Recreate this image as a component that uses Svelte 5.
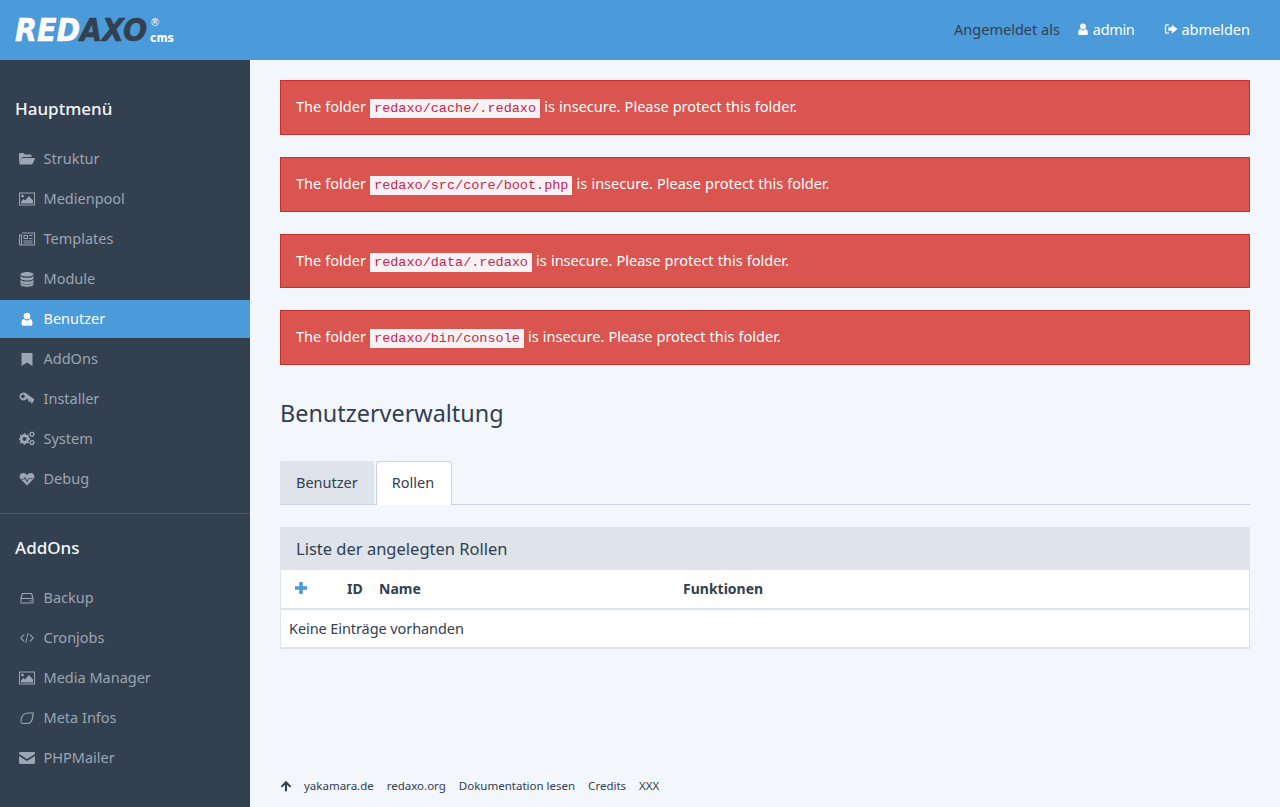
<script lang="ts">
  // builds a gear outline with a round hole, used by the System icon
  function gear(cx: number, cy: number, r: number, teeth: number, hole: number) {
    let d = '';
    const step = (Math.PI * 2) / (teeth * 4);
    const radii = [r, r, r * 0.8, r * 0.8];
    for (let i = 0; i < teeth * 4; i++) {
      const a = i * step - step / 2;
      const rad = radii[i % 4];
      const x = (cx + Math.cos(a) * rad).toFixed(2);
      const y = (cy + Math.sin(a) * rad).toFixed(2);
      d += (i === 0 ? 'M' : 'L') + x + ' ' + y;
    }
    d += `zM${cx - hole} ${cy}a${hole} ${hole} 0 1 0 ${hole * 2} 0a${hole} ${hole} 0 1 0 ${-hole * 2} 0z`;
    return d;
  }

  const icons: Record<string, string> = {
    folder:
      'M0 12.5V3.2C0 2.5.5 2 1.2 2h3.3l1.3 1.4h5.5c.7 0 1.2.5 1.2 1.2V6H4.2c-.7 0-1.3.3-1.7.9zM3.3 7h12.2c.4 0 .6.4.4.8l-2.4 5.2c-.2.4-.6.6-1 .6H.7c-.4 0-.6-.4-.4-.8l2.2-5.4c.2-.3.5-.4.8-.4z',
    picture:
      'M0 1.5h16v13H0zM1 2.500v11h14v-11zM3.500 3.700a1.400 1.400 0 1 0 0 2.800 1.400 1.400 0 0 0 0-2.800zM2 12.500v-2L4.500 8 6 9.500l4-4.500 4 4.500v3z',
    news:
      'M3 1.500h13v13H1.500C.7 14.500 0 13.800 0 13V3.500h3zM1 4.500V13c0 .3.2.5.5.5S2 13.300 2 13V4.500zM3 2.500V13c0 .2 0 .3-.1.5H15v-11zM4.500 4H9v4H4.500zM5.500 5v2H8V5zM10 4h3.500v1H10zM10 7h3.500v1H10zM4.500 9.500h9v1h-9zM4.500 11.500h9v1h-9z',
    database:
      'M8 1c3.600 0 6.500 1 6.500 2.300S11.600 5.600 8 5.600 1.500 4.600 1.500 3.300 4.400 1 8 1zM1.500 5C2.500 6.300 5 6.800 8 6.800s5.500-.5 6.500-1.800v2.200c0 1.300-2.900 2.300-6.500 2.300s-6.500-1-6.500-2.300zM1.500 8.800c1 1.300 3.500 1.800 6.500 1.800s5.500-.5 6.500-1.800V11c0 1.300-2.900 2.300-6.500 2.300S1.500 12.300 1.500 11zM1.500 12c1 1.300 3.500 1.700 6.500 1.700s5.500-.4 6.500-1.700v1.500c0 1.300-2.900 2.300-6.500 2.300s-6.500-1-6.500-2.300z',
    user:
      'M8 1.700a3.300 3.300 0 1 0 0 6.600 3.300 3.300 0 0 0 0-6.600zM4.300 14.800c-1.100 0-1.800-.7-1.800-1.800 0-2.400.5-5 2.500-5 .8.900 1.800 1.500 3 1.500s2.200-.6 3-1.500c2 0 2.500 2.600 2.500 5 0 1.100-.7 1.800-1.800 1.800z',
    bookmark: 'M2.500 2h11v13L8 11.500 2.500 15z',
    key:
      'M4.500 1.500a4 4 0 1 0 3.400 6.100l1.800 1.300-.7 1.100 1.400 1 .7-1.100.9.6-.6 1.100 1.300.9 1.600-1.500 1-2.800-7-4.900A4 4 0 0 0 4.500 1.500zM4 3.600a1.800 1.800 0 1 1 0 3.600 1.800 1.800 0 0 1 0-3.600z',
    cogs: gear(5.5, 8, 5.8, 8, 2) + gear(13, 3.2, 2.9, 6, 1.2) + gear(13, 11.6, 2.9, 6, 1.2),
    heart:
      'M8 14.500 1.500 8C-.5 5.500 1 2 4.200 2 5.800 2 7 2.800 8 4c1-1.200 2.200-2 3.800-2C15 2 16.500 5.500 14.500 8zM2.200 7.700h2.800l1-1.900 2 3.800 1.400-2.300h4.400v.8h-3.900L8 11.400l-2-3.800-.5.900H2.200z',
    hdd:
      'M3.700 3h8.600c.4 0 .7.2.9.5L14.500 8v4.500c0 .6-.4 1-1 1h-11c-.6 0-1-.4-1-1V8l1.300-4.500c.2-.3.5-.5.900-.5zM3.900 4 2.700 8h10.600l-1.200-4zM2.500 9v3.500h11V9zM10.500 10.500h1v1h-1zM12 10.500h1v1h-1z',
    code:
      'M5 4 1 8l4 4 .7-.7L2.400 8l3.300-3.300zM11 4l4 4-4 4-.7-.7L13.600 8l-3.300-3.300zM9.400 3 7.300 13h-.9L8.500 3z',
    leaf:
      'M15 2.500C14 6 15 14 8 14H4c-1.500 0-2.500-1-2.500-3 0-5 3.500-8.500 7.500-8.500zM13.800 3.500H9C5.500 3.500 2.500 6.500 2.500 11c0 1.400.6 2 1.500 2h4c5.500 0 4.600-6.500 5.800-9.500z',
    envelope:
      'M0 3.300C0 2.600.6 2 1.300 2h13.400c.7 0 1.300.6 1.300 1.300 0 .5-.3 1-.8 1.300L8 9 .8 4.600C.3 4.300 0 3.800 0 3.300zM0 6l8 5 8-5v6.500c0 .8-.7 1.500-1.500 1.500h-13C.7 14 0 13.300 0 12.500z',
    signout:
      'M5.500 2.500H3a2 2 0 0 0-2 2v7a2 2 0 0 0 2 2h2.500V12H3a.5.5 0 0 1-.5-.5v-7A.5.5 0 0 1 3 4h2.500zM9 3l6.500 5L9 13v-3H5V6h4z',
    up: 'M8 2l6 6.300-1.500 1.500-3.300-3.300V14H6.800V6.500L3.500 9.800 2 8.300z',
    plus: 'M6.300 2h3.400v4.300H14v3.400H9.700V14H6.300V9.700H2V6.300h4.300z',
  };

  const mainNav = [
    { label: 'Struktur', icon: 'folder' },
    { label: 'Medienpool', icon: 'picture' },
    { label: 'Templates', icon: 'news' },
    { label: 'Module', icon: 'database' },
    { label: 'Benutzer', icon: 'user', active: true },
    { label: 'AddOns', icon: 'bookmark' },
    { label: 'Installer', icon: 'key' },
    { label: 'System', icon: 'cogs' },
    { label: 'Debug', icon: 'heart' },
  ];

  const addonNav = [
    { label: 'Backup', icon: 'hdd' },
    { label: 'Cronjobs', icon: 'code' },
    { label: 'Media Manager', icon: 'picture' },
    { label: 'Meta Infos', icon: 'leaf' },
    { label: 'PHPMailer', icon: 'envelope' },
  ];

  const folders = [
    'redaxo/cache/.redaxo',
    'redaxo/src/core/boot.php',
    'redaxo/data/.redaxo',
    'redaxo/bin/console',
  ];

  const footerLinks = ['yakamara.de', 'redaxo.org', 'Dokumentation lesen', 'Credits', 'XXX'];
</script>

{#snippet icon(name: string)}
  <svg class="icon" viewBox="0 0 16 16" aria-hidden="true"><path fill-rule="evenodd" d={icons[name]} /></svg>
{/snippet}

{#snippet navList(items)}
  <ul class="nav">
    {#each items as item}
      <li class:active={item.active}>
        <span class="nav-icon">{@render icon(item.icon)}</span>
        <span class="nav-label">{item.label}</span>
      </li>
    {/each}
  </ul>
{/snippet}

<div class="page">
  <header class="topbar">
    <svg class="logo" viewBox="0 0 160 26" role="img" aria-label="REDAXO cms">
      <text class="logo-word" transform="translate(0 24) scale(1 1.15)"><tspan class="logo-red">RED</tspan><tspan class="logo-axo">AXO</tspan></text>
      <text class="logo-reg" x="135" y="8.500">®</text>
      <text class="logo-cms" x="135" y="24.500" textLength="24" lengthAdjust="spacingAndGlyphs">cms</text>
    </svg>
    <div class="session">
      <span class="session-label">Angemeldet als</span>
      <span class="session-link user-link">{@render icon('user')}admin</span>
      <span class="session-link">{@render icon('signout')}abmelden</span>
    </div>
  </header>

  <div class="layout">
    <aside class="sidebar">
      <h4 class="side-title">Hauptmenü</h4>
      {@render navList(mainNav)}
      <hr />
      <h4 class="side-title addons">AddOns</h4>
      {@render navList(addonNav)}
    </aside>

    <main class="content">
      {#each folders as folder}
        <div class="alert">The folder <code>{folder}</code> is insecure. Please protect this folder.</div>
      {/each}

      <h1>Benutzerverwaltung</h1>

      <div class="tabs">
        <span class="tab">Benutzer</span>
        <span class="tab current">Rollen</span>
      </div>

      <section class="panel">
        <h2>Liste der angelegten Rollen</h2>
        <table>
          <colgroup>
            <col class="col-add" />
            <col class="col-id" />
            <col class="col-name" />
            <col />
          </colgroup>
          <thead>
            <tr>
              <th class="add">{@render icon('plus')}</th>
              <th>ID</th>
              <th>Name</th>
              <th>Funktionen</th>
            </tr>
          </thead>
          <tbody>
            <tr><td colspan="4">Keine Einträge vorhanden</td></tr>
          </tbody>
        </table>
      </section>

      <footer class="foot">
        <span class="foot-up">{@render icon('up')}</span>
        {#each footerLinks as link}
          <span>{link}</span>
        {/each}
      </footer>
    </main>
  </div>
</div>

<style>
  :global(body) {
    margin: 0;
    background: #f3f6fb;
    color: #324050;
    font-family: "Noto Sans", "Open Sans", sans-serif;
    font-size: 14.5px;
  }

  .page {
    height: 807px;
    display: flex;
    flex-direction: column;
    overflow: hidden;
  }

  .icon {
    width: 1em;
    height: 1em;
    fill: currentColor;
    flex: none;
  }

  .topbar {
    height: 60px;
    flex: none;
    box-sizing: border-box;
    display: flex;
    align-items: center;
    justify-content: space-between;
    padding: 0 30px 0 15px;
    background: #4b9ad9;
  }

  .logo {
    width: 160px;
    height: 26px;
    margin-top: -1px;
    overflow: visible;
  }

  .logo text {
    font-family: "DejaVu Sans", Roboto, sans-serif;
    font-weight: 700;
  }

  .logo .logo-word {
    font-size: 28.500px;
    font-style: oblique;
    stroke-width: 0.5px;
  }

  .logo-red {
    fill: #fff;
    stroke: #fff;
  }

  .logo-axo {
    fill: #324050;
    stroke: #324050;
  }

  .logo .logo-reg {
    font-size: 10px;
    font-weight: 400;
    fill: #fff;
  }

  .logo .logo-cms {
    font-size: 13px;
    fill: #fff;
  }

  .session {
    display: flex;
    align-items: center;
    padding-bottom: 2px;
  }

  .session-label {
    margin-right: 16px;
  }

  .session-link {
    display: flex;
    align-items: center;
    gap: 3px;
    color: #fff;
  }

  .session-link .icon {
    font-size: 14px;
  }

  .user-link {
    margin-right: 30px;
    letter-spacing: -0.35px;
  }

  .layout {
    flex: 1;
    display: flex;
    min-height: 0;
  }

  .sidebar {
    width: 250px;
    flex: none;
    box-sizing: border-box;
    padding-top: 37px;
    background: #324050;
    color: #9ca5b2;
  }

  .side-title {
    margin: 0;
    padding-left: 15px;
    color: #f3f6fb;
    font-size: 17px;
    font-weight: 500;
    line-height: 24px;
  }

  .side-title.addons {
    margin-top: 22px;
  }

  .nav {
    list-style: none;
    margin: 19px 0 0;
    padding: 0;
    display: flex;
    flex-direction: column;
    gap: 2px;
  }

  .nav li {
    height: 38px;
    display: flex;
    align-items: center;
    padding-left: 19px;
    gap: 8.5px;
  }

  .nav li.active {
    background: #4b9ad9;
    color: #fff;
  }

  .nav-icon {
    display: flex;
    font-size: 16px;
  }

  .nav-label {
    margin-top: -2px;
  }

  hr {
    height: 1px;
    margin: 15px 0 0;
    border: 0;
    background: #4a5767;
  }

  .content {
    flex: 1;
    min-width: 0;
    display: flex;
    flex-direction: column;
    padding: 20px 30px 0;
  }

  .alert {
    box-sizing: border-box;
    height: 54.8px;
    margin-bottom: 22px;
    padding: 14px 15px;
    border: 1px solid #c9302c;
    background: #da5550;
    color: #fff;
    line-height: 22px;
    word-spacing: 0.35px;
  }

  code {
    padding: 2px 4px;
    background: #f9f2f4;
    color: #c7254e;
    font-family: "Liberation Mono", monospace;
    font-size: 13.5px;
    word-spacing: 0;
  }

  h1 {
    margin: 11px 0 0;
    font-size: 23.4px;
    font-weight: 400;
    line-height: 30px;
  }

  .tabs {
    box-sizing: border-box;
    display: flex;
    gap: 2px;
    height: 44px;
    margin-top: 33px;
    border-bottom: 1px solid #cbd3e0;
  }

  .tab {
    box-sizing: border-box;
    height: 43px;
    display: flex;
    align-items: center;
    padding: 0 15px 2px;
    border: 1px solid #dfe3ea;
    border-bottom: 0;
    border-radius: 3px 3px 0 0;
    background: #dfe3ea;
  }

  .tab.current {
    height: 44px;
    padding: 0 17px 3px 15px;
    border-color: #cbd3e0;
    background: #fff;
  }

  .panel {
    margin-top: 22px;
    border: 1px solid #dfe3ea;
    border-top: 0;
    border-bottom-width: 2px;
    background: #fff;
  }

  h2 {
    margin: 0 -1px;
    padding: 0 16px;
    background: #dfe3ea;
    font-size: 16.5px;
    font-weight: 400;
    line-height: 43px;
  }

  table {
    width: 100%;
    border-collapse: collapse;
    table-layout: fixed;
  }

  .col-add {
    width: 58px;
  }

  .col-id {
    width: 32px;
  }

  .col-name {
    width: 304px;
  }

  th {
    box-sizing: border-box;
    height: 39px;
    padding: 0 8px 2px;
    border-bottom: 2px solid #dfe3ea;
    text-align: left;
    font-size: 14px;
    font-weight: 700;
  }

  th.add {
    color: #4b9ad9;
    font-size: 16px;
    padding-left: 12px;
  }

  th.add .icon {
    display: block;
  }

  td {
    box-sizing: border-box;
    height: 38px;
    padding: 0 8px 2px;
    letter-spacing: -0.08px;
  }

  .foot {
    margin-top: auto;
    height: 43px;
    display: flex;
    align-items: center;
    gap: 13px;
    font-size: 11.5px;
  }

  .foot-up {
    display: flex;
    margin: 0 -2px 0 -1px;
    font-size: 14px;
  }
</style>
